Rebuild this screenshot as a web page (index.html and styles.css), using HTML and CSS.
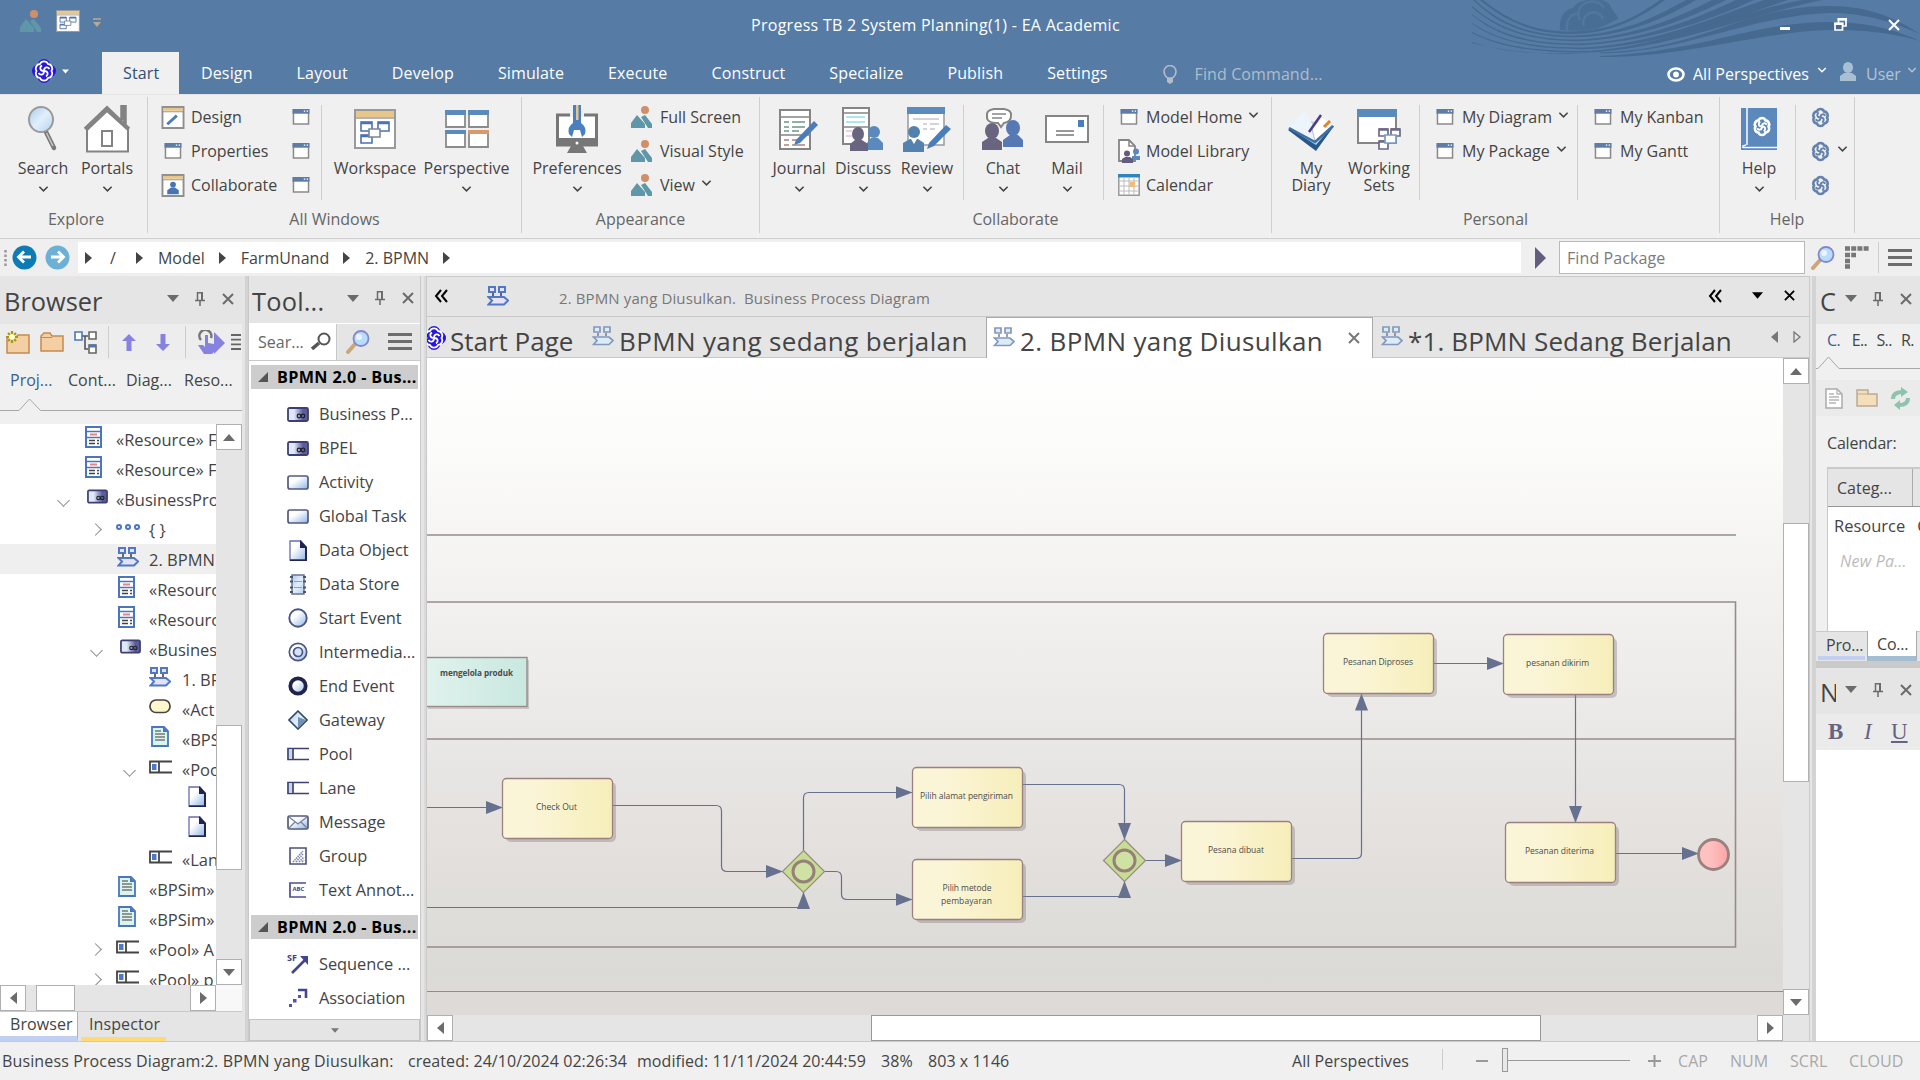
FILE: index.html
```html
<!DOCTYPE html>
<html lang="id">
<head>
<meta charset="utf-8">
<title>Progress TB 2 System Planning(1) - EA Academic</title>
<link rel="stylesheet" href="styles.css">
</head>
<body>
<svg class="defs" width="0" height="0" aria-hidden="true">
  <defs>
    <linearGradient id="gBlue" x1="0" y1="0" x2="1" y2="1"><stop offset=".35" stop-color="#fff"/><stop offset="1" stop-color="#8db4e6"/></linearGradient>
    <linearGradient id="gDark" x1="0" y1="0" x2="1" y2="0"><stop offset=".3" stop-color="#dfe9fa"/><stop offset=".75" stop-color="#5a5c9c"/></linearGradient>
    <linearGradient id="gLens" x1="0" y1="0" x2="1" y2="1"><stop offset="0" stop-color="#a9cbef"/><stop offset=".5" stop-color="#e2effb"/><stop offset="1" stop-color="#b5d2ef"/></linearGradient>
    <symbol id="chev" viewBox="0 0 12 8"><path d="M1.500 1.500 6 6 10.500 1.500" fill="none" stroke="currentColor" stroke-width="1.700"/></symbol>
    <symbol id="tri" viewBox="0 0 12 7"><path d="M0 0H12L6 7Z" fill="currentColor"/></symbol>
    <symbol id="triR" viewBox="0 0 7 12"><path d="M0 0 7 6 0 12Z" fill="currentColor"/></symbol>
    <symbol id="triL" viewBox="0 0 7 12"><path d="M7 0 0 6 7 12Z" fill="currentColor"/></symbol>
    <symbol id="cross" viewBox="0 0 12 12"><path d="M1 1 11 11M11 1 1 11" stroke="currentColor" stroke-width="2"/></symbol>
    <symbol id="pin" viewBox="0 0 10 14"><path d="M2.500 0V8M0 8.500H10M7 0V8M2.500 .7H8M5 9V14" fill="none" stroke="currentColor" stroke-width="1.500"/><path d="M6 0H8V8H6Z" fill="currentColor"/></symbol>
    <symbol id="lines" viewBox="0 0 24 17"><path d="M0 1.500H24M0 8.500H24M0 15.500H24" stroke="currentColor" stroke-width="3"/></symbol>
    <symbol id="dblL" viewBox="0 0 14 14"><path d="M7 1 2 7 7 13M13 1 8 7 13 13" fill="none" stroke="#000" stroke-width="2"/></symbol>
    <symbol id="knot" viewBox="1 0 22 24"><path d="M8 5a4.300 4.300 0 0 1 8 0 4.500 4.500 0 0 1 3.500 7 4.500 4.500 0 0 1-3.500 7 4.300 4.300 0 0 1-8 0 4.500 4.500 0 0 1-3.500-7A4.500 4.500 0 0 1 8 5Z" fill="none" stroke="currentColor" stroke-width="3"/><path d="M12 12C7.500 12 7.500 8 10 6.500M12 12c4.500 0 4.500 4 2 5.500M12 12c0-4.500 4-4.500 5.500-2M12 12c0 4.500-4 4.500-5.500 2" fill="none" stroke="currentColor" stroke-width="2.200"/></symbol>
    <symbol id="logo" viewBox="0 0 24 24"><g fill="#2716e0"><circle cx="12" cy="6.500" r="6.500"/><circle cx="12" cy="17.500" r="6.500"/><circle cx="6.500" cy="12" r="6.500"/><circle cx="17.500" cy="12" r="6.500"/></g><g fill="none" stroke="#fff" stroke-width="1.800"><path d="M8 5a4.300 4.300 0 0 1 8 0 4.500 4.500 0 0 1 3.500 7 4.500 4.500 0 0 1-3.500 7 4.300 4.300 0 0 1-8 0 4.500 4.500 0 0 1-3.500-7A4.500 4.500 0 0 1 8 5Z"/><path d="M12 12C7.500 12 7.500 8 10 6.500M12 12c4.500 0 4.500 4 2 5.500M12 12c0-4.500 4-4.500 5.500-2M12 12c0 4.500-4 4.500-5.500 2"/></g></symbol>
    <symbol id="bpd" viewBox="0 0 22 21"><g fill="#e4e2fc" stroke="#5078c4" stroke-width="2"><path d="M2 2H8V7H2ZM12 2H18V7H12Z"/><path d="M1.500 12H17L21 15.500 17 19.500H1.500L5 15.500Z"/></g><path d="M6 8V11M14 8V11" stroke="#444" stroke-width="1.600"/></symbol>
    <symbol id="bpdSoft" viewBox="0 0 22 21"><g fill="#dcebf8" stroke="#8298bd" stroke-width="1.700"><path d="M2 2H8V7H2ZM12 2H18V7H12Z"/><path d="M1.500 12H17L21 15.500 17 19.500H1.500L5 15.500Z"/></g><path d="M6 8V11M14 8V11" stroke="#777" stroke-width="1.400"/></symbol>
    <symbol id="win" viewBox="0 0 18 17"><path d="M1 1H17V16H1Z" fill="#fff" stroke="#8a8a8a" stroke-width="1.600"/><path d="M0 0H18V5H0Z" fill="#5d7da8"/><path d="M12 1.500h1.500v1.500H12zM15 1.500h1.500v1.500H15z" fill="#fff"/></symbol>
    <symbol id="people" viewBox="0 0 22 22"><path d="M0 22V17L6 9 14 18V22ZM10 11 14 9 21 18V22H17Z" fill="#5f96a8"/><circle cx="14" cy="4" r="4" fill="#d08f68"/></symbol>
    <symbol id="dDesign" viewBox="0 0 24 24"><path d="M1 1H23V23H1Z" fill="#fff" stroke="#8f8f8f" stroke-width="2"/><path d="M2 2H22V5H2Z" fill="#e8c588"/><path d="M1 6H23" stroke="#8f8f8f"/><path d="M6 19 16 10" stroke="#4a7dbb" stroke-width="3"/></symbol>
    <symbol id="dCollab" viewBox="0 0 24 24"><path d="M1 1H23V23H1Z" fill="#fff" stroke="#8f8f8f" stroke-width="2"/><path d="M2 2H22V5H2Z" fill="#e8c588"/><path d="M1 6H23" stroke="#8f8f8f"/><circle cx="12" cy="11" r="3" fill="#4674b5"/><path d="M6 21V17L10 14H14L18 17V21Z" fill="#4674b5"/></symbol>
    <symbol id="search" viewBox="0 0 30 46"><path d="M18 26 26 42" stroke="#777" stroke-width="4.500" stroke-linecap="round"/><path d="M18.500 27 25 40" stroke="#c8c8c8" stroke-width="1.500"/><ellipse cx="13" cy="13.500" rx="12" ry="12.500" fill="url(#gLens)" stroke="#9a9a9a" stroke-width="2"/></symbol>
    <symbol id="house" viewBox="0 0 46 48"><path d="M3 25V46.500H44V25L23 6Z" fill="#fff" stroke="#838383" stroke-width="2"/><path d="M1 24 23 3 45 24M38 15V1H41V19" fill="none" stroke="#838383" stroke-width="3.500"/><path d="M18 26H28V41H18Z" fill="#fff" stroke="#838383" stroke-width="2"/></symbol>
    <symbol id="workspace" viewBox="0 0 42 40"><path d="M1 1H41V39H1Z" fill="#fff" stroke="#9a9a9a" stroke-width="2"/><path d="M2 2H40V8H2Z" fill="#e8c588"/><path d="M1 9H41" stroke="#9a9a9a" stroke-width="1.500"/><g fill="#fff" stroke="#4c72b4" stroke-width="1.600"><path d="M7 13H18V22H7ZM24 13H35V22H24ZM7 26H18V34H7Z"/><path d="M7 14H18M24 14H35M7 27H18" stroke-width="2.500"/><path d="M15 20H26V28H15Z" stroke="#789"/></g></symbol>
    <symbol id="persp" viewBox="0 0 44 38"><g fill="#fff" stroke="#8b8b8b" stroke-width="1.800"><path d="M1 1H20V17H1ZM24 1H43V17H24ZM1 21H20V37H1ZM24 21H43V37H24Z"/></g><path d="M0 0H21V5H0ZM23 0H44V5H23ZM0 20H21V24H0Z" fill="#5b8abd"/><path d="M23 20H44V24H23Z" fill="#d79a68"/></symbol>
    <symbol id="prefs" viewBox="0 0 42 48"><path d="M1.500 10H40.500V40H1.500Z" fill="#fff" stroke="#777" stroke-width="3"/><path d="M1 33H41V41H1ZM15 41H27L31 48H11Z" fill="#777"/><circle cx="21" cy="38" r="1.500" fill="#fff"/><path d="M14 8H28V12H14Z" fill="#f0f0f0"/><path d="M17 0H25V18Q31 22 29 29L26 32 24 25H18L16 32 13 29Q11 22 17 18Z" fill="#4a7fc0"/><path d="M20 0H22.500V15H20Z" fill="#e8c588"/></symbol>
    <symbol id="journal" viewBox="0 0 40 41"><path d="M1 1H31V40H1Z" fill="#fff" stroke="#858585" stroke-width="2"/><path d="M1 8H31M1 26H31" stroke="#858585" stroke-width="1.500"/><path d="M5 13H10M13 13H26M5 18H10M13 18H26M5 22H10M13 22H20" stroke="#6f9588" stroke-width="1.500"/><path d="M5 31H10M13 31H19M5 36H10M13 36H26" stroke="#b28373" stroke-width="1.500"/><path d="M17 31 35 12 39 16 21 34 15 36Z" fill="#4a7dbb"/></symbol>
    <symbol id="discuss" viewBox="0 0 42 44"><path d="M1 1H27V37H1Z" fill="#fff" stroke="#858585" stroke-width="2"/><path d="M1 6H27M1 20H27" stroke="#858585" stroke-width="1.500"/><path d="M4 10H23M4 15H23" stroke="#59d0db"/><path d="M4 24H10M4 29H10" stroke="#e79ad0"/><circle cx="32" cy="25" r="6" fill="#5a89bd"/><path d="M24 43V37L29 31H36L41 36V43Z" fill="#5a89bd"/><ellipse cx="16" cy="27" rx="6" ry="7" fill="#69647f"/><path d="M8 44V37L13 33H20L26 37V44Z" fill="#69647f"/></symbol>
    <symbol id="review" viewBox="0 0 48 45"><path d="M5 1H41V38H5Z" fill="#fff" stroke="#999" stroke-width="1.500"/><path d="M4 0H42V7H4Z" fill="#5b8abd"/><path d="M10 12H36M20 17H24M27 17H36M20 22H24M27 22H32" stroke="#aaa"/><circle cx="11" cy="25" r="6" fill="#5382ae"/><path d="M0 45V36L7 32H15L21 36V45Z" fill="#5382ae"/><path d="M8 32 11 37 14 32" fill="#fff"/><path d="M26 36 43 18 48 22 31 39 24 42Z" fill="#4a7dbb"/></symbol>
    <symbol id="chat" viewBox="0 0 42 42"><path d="M12 1H22Q30 2 29 8 29 14 22 15L19 19 16 15Q4 15 5 8 4 2 12 1Z" fill="#fff" stroke="#858585" stroke-width="2"/><path d="M10 6H24M10 10H20" stroke="#858585" stroke-width="1.500"/><ellipse cx="31" cy="20" rx="7" ry="8" fill="#5678b5"/><path d="M21 39V32L28 27H36L41 32V39Z" fill="#5678b5"/><ellipse cx="10" cy="23" rx="7" ry="8" fill="#69647f"/><path d="M0 42V34L6 30H14L20 34V42Z" fill="#69647f"/></symbol>
    <symbol id="mail" viewBox="0 0 44 28"><path d="M1 1H43V27H1Z" fill="#fff" stroke="#858585" stroke-width="2"/><path d="M33 5H39V12H33Z" fill="#4a7dbb"/><path d="M11 16H29M11 20H29" stroke="#777" stroke-width="1.500"/></symbol>
    <symbol id="library" viewBox="0 0 22 24"><path d="M1 1H11L17 7V22H1Z" fill="#fff" stroke="#858585" stroke-width="1.800"/><path d="M11 1V7H17" fill="none" stroke="#858585" stroke-width="1.500"/><circle cx="18" cy="12.500" r="3" fill="#5a89bd"/><path d="M14 21V17H22V21Z" fill="#5a89bd"/><circle cx="9" cy="14.500" r="3" fill="#625c80"/><path d="M4 24V20L7 18H12L15 20V24Z" fill="#625c80"/></symbol>
    <symbol id="calendar" viewBox="0 0 22 22"><path d="M.8 1H21.200V21.200H.8Z" fill="#fff" stroke="#999" stroke-width="1.500"/><path d="M1 7H21M1 12H21M1 17H21M6 4V21M11 4V21M16 4V21" stroke="#bbb"/><path d="M0 0H22V3.500H0Z" fill="#2e86bd"/><path d="M11.500 8H17V13H11.500Z" fill="#f5b97a"/></symbol>
    <symbol id="diary" viewBox="0 0 46 44"><path d="M0 23 16 14 46 19 28 44Z" fill="#28588a"/><path d="M1 21 17 13 45 18 28 38Z" fill="#bcd4ea"/><path d="M1 20 17 4 28 24 27 34Z" fill="#eef4fc"/><path d="M27 34 24 22 34 11 44 18Z" fill="#fff"/><path d="M27 34 24 22" stroke="#a9bfd8"/><path d="M1 21 27 35 45 19" fill="none" stroke="#3f6fa5" stroke-width="2.500"/><path d="M21 25 33 8" stroke="#4a3b8c" stroke-width="2.500"/><path d="M36 20 42 14" stroke="#e08030" stroke-width="3"/></symbol>
    <symbol id="sets" viewBox="0 0 44 41"><path d="M1 1H39V34H1Z" fill="#fff" stroke="#858585" stroke-width="2"/><path d="M0 0H40V8H0Z" fill="#5b8abd"/><g fill="#fff" stroke="#6c6a85" stroke-width="1.700"><path d="M22 20H31V27H22ZM34 20H43V27H34ZM22 32H31V40H22Z"/><path d="M22 20.500H31M34 20.500H43M22 32.500H31" stroke-width="2.500"/><path d="M28 26H39V34H28Z" stroke="#789cc0"/></g></symbol>
    <symbol id="book" viewBox="0 0 36 42"><path d="M0 0H36V42H0Z" fill="#5b89bb"/><path d="M6 0V37M2 39.500H36" stroke="#f4f7fb" stroke-width="1.600"/><path d="M2 40V38L5 37" fill="none" stroke="#f4f7fb" stroke-width="1.600"/></symbol>
    <symbol id="lens" viewBox="0 0 24 24"><path d="M2 22 10 13" stroke="#c9a777" stroke-width="4" stroke-linecap="round"/><circle cx="15" cy="8.500" r="7.500" fill="#b9dcff" stroke="#8387cc" stroke-width="1.800"/><circle cx="13" cy="7" r="3" fill="#e9f5ff"/></symbol>
    <symbol id="resource" viewBox="0 0 17 22"><path d="M1 1H16V21H1Z" fill="#fff" stroke="#4a76c0" stroke-width="2"/><path d="M1 5.500H16M1 11.500H16" stroke="#4a76c0" stroke-width="1.500"/><path d="M5 8.500H12" stroke="#ef8080" stroke-width="2"/><path d="M4 14.500H10M4 17.500H10M12 14.500H14M12 17.500H14" stroke="#444" stroke-width="1.300"/></symbol>
    <symbol id="bp" viewBox="0 0 22 15"><rect x="1" y="1" width="20" height="13" rx="1.500" fill="url(#gDark)" stroke="#3d3f73" stroke-width="1.800"/><circle cx="12" cy="9" r="1.800" fill="none" stroke="#222" stroke-width="1.200"/><circle cx="16" cy="9" r="1.800" fill="none" stroke="#222" stroke-width="1.200"/></symbol>
    <symbol id="act" viewBox="0 0 22 15"><rect x="1" y="1" width="20" height="13" rx="2" fill="url(#gBlue)" stroke="#55597f" stroke-width="1.700"/></symbol>
    <symbol id="dots" viewBox="0 0 24 8"><g fill="none" stroke="#4a76c0" stroke-width="2"><circle cx="3" cy="4" r="2"/><circle cx="12" cy="4" r="2"/><circle cx="21" cy="4" r="2"/></g></symbol>
    <symbol id="oval" viewBox="0 0 22 15"><rect x="1" y="1" width="20" height="12.500" rx="6" fill="#fff8cc" stroke="#444" stroke-width="1.700"/></symbol>
    <symbol id="sim" viewBox="0 0 18 21"><path d="M1 1H13L17 5V20H1Z" fill="#d9f5ef" stroke="#4a76c0" stroke-width="1.800"/><path d="M12 1V6H17Z" fill="#4a76c0"/><path d="M4 5H10M4 8H14M4 11H14M4 14H14" stroke="#777" stroke-width="1.300"/></symbol>
    <symbol id="poolT" viewBox="0 0 23 14"><path d="M23 1.500H1V12.500H23M10 1.500V12.500" fill="none" stroke="#444" stroke-width="1.800"/><path d="M3 4H7.500V10H3Z" fill="#4d78cc"/></symbol>
    <symbol id="pool" viewBox="0 0 22 14"><path d="M22 1.500H1V12.500H22M6 1.500V12.500" fill="none" stroke="#3f4270" stroke-width="1.700"/><path d="M2 3H5V11H2Z" fill="#bcd8f4"/></symbol>
    <symbol id="data" viewBox="0 0 18 21"><path d="M1 1H12L17 7V20H1Z" fill="url(#gBlue)" stroke="#6a6cb0" stroke-width="1.300"/><path d="M11 0 18 7V21H1V19.500H16V8H11Z" fill="#1f2550"/></symbol>
    <symbol id="store" viewBox="0 0 18 21"><rect x="3" y="1" width="12" height="19" fill="url(#gLens)" stroke="#6a7190" stroke-width="1.500"/><path d="M1 3H4M1 7.500H4M1 13.500H4M1 18H4M14 3H17M14 7.500H17M14 13.500H17M14 18H17" stroke="#4c526e" stroke-width="2.200"/><path d="M5 7.500H13M5 13.500H13" stroke="#8fa3c0" stroke-width="1"/></symbol>
    <symbol id="evS" viewBox="0 0 20 20"><circle cx="10" cy="10" r="8.700" fill="url(#gBlue)" stroke="#4b5486" stroke-width="1.900"/></symbol>
    <symbol id="evI" viewBox="0 0 20 20"><circle cx="10" cy="10" r="8.700" fill="url(#gBlue)" stroke="#4b5486" stroke-width="1.700"/><circle cx="10" cy="10" r="4.500" fill="#d5e4f5" stroke="#4b5486" stroke-width="1.700"/></symbol>
    <symbol id="evE" viewBox="0 0 20 20"><circle cx="10" cy="10" r="7.700" fill="url(#gBlue)" stroke="#20234c" stroke-width="3.800"/></symbol>
    <symbol id="gate" viewBox="0 0 20 20"><path d="M10 1 19 10 10 19 1 10Z" fill="url(#gLens)" stroke="#34486c" stroke-width="1.600"/><path d="M10 18 18 10 10 7Z" fill="#6f92b4"/></symbol>
    <symbol id="msg" viewBox="0 0 22 15"><rect x="1" y="1" width="20" height="13" rx="1.500" fill="url(#gBlue)" stroke="#555b78" stroke-width="1.700"/><path d="M2 2 11 9 20 2M2 13 8 7M20 13 14 7" fill="none" stroke="#777f96" stroke-width="1.200"/></symbol>
    <symbol id="group" viewBox="0 0 18 18"><path d="M1 1H17V17H1Z" fill="#fff" stroke="#4b4f7c" stroke-width="1.600"/><path d="M4 15 14 4M7 15 14 7M10 15 15 10M13 15 15 13" stroke="#7d86a8" stroke-width="1.600" stroke-dasharray="1.500 .8"/></symbol>
    <symbol id="annot" viewBox="0 0 18 16"><path d="M17 1H1V15H17" fill="none" stroke="#4b4f90" stroke-width="1.700"/><text x="3.500" y="8.500" class="mini">ABC</text></symbol>
    <symbol id="seq" viewBox="0 0 22 21"><text x="0" y="7" class="mini mini-sf">SF</text><path d="M5 19 18 6" stroke="#45458f" stroke-width="2.600"/><path d="M13 2H21V11Z" fill="#45458f"/></symbol>
    <symbol id="assoc" viewBox="0 0 20 20"><path d="M1 16h3v3H1zM5 11h3.500v3.500H5zM10 7h3v3h-3z" fill="#5152b0"/><path d="M10 2H18V10" fill="none" stroke="#45458f" stroke-width="2.600"/></symbol>
    <symbol id="folder" viewBox="0 0 24 20"><path d="M1 19V4L4 1H10L12 4H23V19Z" fill="#f3cfa3" stroke="#c48b52" stroke-width="1.500"/><path d="M1 5.500H12" stroke="#c48b52"/></symbol>
  </defs>
</svg>

<div class="app">
  <header class="titlebar">
    <svg class="swirl" width="448" height="60" viewBox="0 0 448 60">
      <g fill="#46698f">
        <path d="M11 0C40 23 65 31.500 98 31.500 140 31.500 165 16 188 0H193C168 18 140 34 98 34 65 33.500 38 25 8 0Z"/>
        <path d="M3 0C33 28 65 35.500 102 35.500 150 34.500 185 16 214 0H224C190 20 150 37 102 37.300 65 37 31 30 1 0Z"/>
        <path d="M0 6C30 32 65 39.500 105 39.500 160 37.500 205 18 240 0H254C210 22 160 40 105 41.200 65 41 30 34 0 7.500Z"/>
        <path d="M0 14C30 38 65 43.500 108 43.500 170 41.500 225 18 264 0H282C235 22 170 43 108 45.200 65 45 30 40 0 15Z"/>
        <path d="M0 23C30 43 65 47.500 112 47.500 180 44.500 240 18 292 0H316C250 22 185 46 112 49.200 65 49 30 44 0 24Z"/>
        <path d="M0 32C30 47 65 51 116 51 190 47 250 16 330 0H350C260 20 195 49 116 52.600 65 52.500 30 48.500 0 33Z"/>
        <path d="M0 42C25 50 45 53 75 53H112C90 54.500 45 54.500 0 43Z"/>
        <path d="M128 52.500C230 50 270 6 358 6 395 6 422 17 448 34 416 20 390 13 358 13 275 16 215 52 128 53.500Z"/>
        <path d="M128 56C230 52 280 22 358 22 400 22 428 32 448 41 420 33 395 30 358 30 285 32 215 57 128 57Z"/>
        <path d="M88 30C87 18 92 9 101 8 106-2 132-4 138 5 141 12 146 15 146 19L134 25C120 32 104 31 88 30Z" opacity=".75"/>
      </g>
      <path d="M95 30C94 20 99 13 106 14M108 20A12 11 0 0 1 132 8M112 26A9 9 0 1 1 131 19" fill="none" stroke="#52779f" stroke-width="2.500"/>
    </svg>
    <div class="title-row">
      <div class="quick">
        <svg width="22" height="22"><use href="#people"/></svg>
        <svg width="24" height="22" viewBox="0 0 42 40" preserveAspectRatio="none"><use href="#workspace" width="42" height="40"/></svg>
        <svg class="quick-more" width="8" height="9" viewBox="0 0 8 9"><path d="M0 1H8" stroke="currentColor" stroke-width="1.500"/><path d="M0 4H8L4 9Z" fill="currentColor"/></svg>
      </div>
      <div class="title">Progress TB 2 System Planning(1) - EA Academic</div>
      <div class="winbtns">
        <svg width="10" height="3"><path d="M0 0H10V3H0Z" fill="#fff"/></svg>
        <svg width="13" height="13" viewBox="0 0 13 13"><path d="M4.500 5V1.500H12V8H9M1 5.500H8.500V12H1Z" fill="none" stroke="#fff" stroke-width="1.700"/><path d="M0 4.500H9.500V7H0ZM3.500 0H13V2.500H3.500Z" fill="#fff"/></svg>
        <svg class="white" width="12" height="12"><use href="#cross"/></svg>
      </div>
    </div>
    <nav class="tabs">
      <div class="appbtn"><svg width="24" height="24"><use href="#logo"/></svg><svg width="7" height="5"><use href="#tri"/></svg></div>
      <span class="tab on">Start</span><span class="tab">Design</span><span class="tab">Layout</span><span class="tab">Develop</span><span class="tab">Simulate</span><span class="tab">Execute</span><span class="tab">Construct</span><span class="tab">Specialize</span><span class="tab">Publish</span><span class="tab">Settings</span>
      <div class="find"><svg width="14" height="19" viewBox="0 0 14 19"><path d="M4.500 13Q1 10 1 6.500A6 6 0 0 1 13 6.500Q13 10 9.500 13Z" fill="none" stroke="#b4bcc8" stroke-width="1.500"/><path d="M4 13H10V17L7 19 4 17Z" fill="#b4bcc8"/></svg><span>Find Command...</span></div>
      <div class="acct">
        <svg width="18" height="15" viewBox="0 0 18 15"><ellipse cx="9" cy="7.500" rx="7.500" ry="6" fill="none" stroke="#fff" stroke-width="2.600"/><circle cx="9" cy="7.500" r="2.900" fill="#fff"/></svg>
        <span class="persp">All Perspectives</span><svg class="cv" width="10" height="8"><use href="#chev"/></svg>
        <svg class="usr" width="16" height="19" viewBox="0 0 16 19"><ellipse cx="8" cy="5.500" rx="5" ry="5.500" fill="#a9bfd4"/><path d="M0 19V14L4 11H12L16 14V19Z" fill="#a9bfd4"/></svg>
        <span class="dim">User</span><svg class="cv dim" width="10" height="8"><use href="#chev"/></svg>
      </div>
    </nav>
  </header>

  <section class="ribbon">
    <div class="grp g1">
      <div class="body">
        <div class="big"><i><svg width="30" height="46"><use href="#search"/></svg></i><b>Search</b><svg class="cv" width="11" height="8"><use href="#chev"/></svg></div>
        <div class="big"><i><svg width="46" height="48"><use href="#house"/></svg></i><b>Portals</b><svg class="cv" width="11" height="8"><use href="#chev"/></svg></div>
      </div><div class="cap">Explore</div>
    </div>
    <div class="grp g2">
      <div class="body">
        <div class="list lw">
          <div><i><svg width="24" height="23"><use href="#dDesign"/></svg></i><span>Design</span><svg class="end" width="18" height="16"><use href="#win"/></svg></div>
          <div><i><svg width="18" height="16"><use href="#win"/></svg></i><span>Properties</span><svg class="end" width="18" height="16"><use href="#win"/></svg></div>
          <div><i><svg width="24" height="23"><use href="#dCollab"/></svg></i><span>Collaborate</span><svg class="end" width="18" height="16"><use href="#win"/></svg></div>
        </div>
        <div class="vsep"></div>
        <div class="big b94"><i><svg width="42" height="40"><use href="#workspace"/></svg></i><b>Workspace</b></div>
        <div class="big b89"><i><svg width="44" height="38"><use href="#persp"/></svg></i><b>Perspective</b><svg class="cv" width="11" height="8"><use href="#chev"/></svg></div>
      </div><div class="cap">All Windows</div>
    </div>
    <div class="grp g3">
      <div class="body">
        <div class="big b92"><i><svg width="42" height="48"><use href="#prefs"/></svg></i><b>Preferences</b><svg class="cv" width="11" height="8"><use href="#chev"/></svg></div>
        <div class="list lp">
          <div><i><svg width="22" height="22"><use href="#people"/></svg></i><span>Full Screen</span></div>
          <div><i><svg width="22" height="22"><use href="#people"/></svg></i><span>Visual Style</span></div>
          <div><i><svg width="22" height="22"><use href="#people"/></svg></i><span>View</span><svg class="cv" width="11" height="8"><use href="#chev"/></svg></div>
        </div>
      </div><div class="cap">Appearance</div>
    </div>
    <div class="grp g4">
      <div class="body">
        <div class="big"><i><svg width="40" height="41"><use href="#journal"/></svg></i><b>Journal</b><svg class="cv" width="11" height="8"><use href="#chev"/></svg></div>
        <div class="big"><i><svg width="42" height="44"><use href="#discuss"/></svg></i><b>Discuss</b><svg class="cv" width="11" height="8"><use href="#chev"/></svg></div>
        <div class="big"><i><svg width="48" height="45"><use href="#review"/></svg></i><b>Review</b><svg class="cv" width="11" height="8"><use href="#chev"/></svg></div>
        <div class="vsep wide"></div>
        <div class="big"><i><svg width="42" height="42"><use href="#chat"/></svg></i><b>Chat</b><svg class="cv" width="11" height="8"><use href="#chev"/></svg></div>
        <div class="big"><i><svg width="44" height="28"><use href="#mail"/></svg></i><b>Mail</b><svg class="cv" width="11" height="8"><use href="#chev"/></svg></div>
        <div class="vsep wide"></div>
        <div class="list lm">
          <div><i><svg width="18" height="16"><use href="#win"/></svg></i><span>Model Home</span><svg class="cv" width="11" height="8"><use href="#chev"/></svg></div>
          <div><i><svg width="22" height="24"><use href="#library"/></svg></i><span>Model Library</span></div>
          <div><i><svg width="22" height="22"><use href="#calendar"/></svg></i><span>Calendar</span></div>
        </div>
      </div><div class="cap">Collaborate</div>
    </div>
    <div class="grp g5">
      <div class="body">
        <div class="big"><i><svg width="46" height="44"><use href="#diary"/></svg></i><b>My<br>Diary</b></div>
        <div class="big b72"><i><svg width="44" height="41"><use href="#sets"/></svg></i><b>Working<br>Sets</b></div>
        <div class="vsep wide"></div>
        <div class="list ld">
          <div><i><svg width="18" height="16"><use href="#win"/></svg></i><span>My Diagram</span><svg class="cv" width="11" height="8"><use href="#chev"/></svg></div>
          <div><i><svg width="18" height="16"><use href="#win"/></svg></i><span>My Package</span><svg class="cv" width="11" height="8"><use href="#chev"/></svg></div>
        </div>
        <div class="vsep after"></div>
        <div class="list lk">
          <div><i><svg width="18" height="16"><use href="#win"/></svg></i><span>My Kanban</span></div>
          <div><i><svg width="18" height="16"><use href="#win"/></svg></i><span>My Gantt</span></div>
        </div>
      </div><div class="cap">Personal</div>
    </div>
    <div class="grp g6">
      <div class="body">
        <div class="big"><i><svg width="36" height="42" viewBox="0 0 36 42"><use href="#book" width="36" height="42"/><use href="#knot" class="onbook" x="11" y="8" width="20" height="21"/></svg></i><b>Help</b><svg class="cv" width="11" height="8"><use href="#chev"/></svg></div>
        <div class="vsep wide"></div>
        <div class="list lh">
          <div><svg class="knot" width="21" height="21"><use href="#knot"/></svg></div>
          <div><svg class="knot" width="21" height="21"><use href="#knot"/></svg><svg class="cv" width="11" height="8"><use href="#chev"/></svg></div>
          <div><svg class="knot" width="21" height="21"><use href="#knot"/></svg></div>
        </div>
      </div><div class="cap">Help</div>
    </div>
  </section>

  <section class="crumbs">
    <svg class="grip" width="3" height="16" viewBox="0 0 3 16"><path d="M1.500 0V16" stroke="#999" stroke-width="2.500" stroke-dasharray="2.500 2"/></svg>
    <svg class="back" width="25" height="25" viewBox="0 0 25 25"><circle cx="12.500" cy="12.500" r="12" fill="#0f7bb5"/><path d="M19 12H8M12 6.500 6.500 12 12 17.500" fill="none" stroke="#fff" stroke-width="2.800"/></svg>
    <svg class="fwd" width="25" height="25" viewBox="0 0 25 25"><circle cx="12.500" cy="12.500" r="12" fill="#6cb1d5"/><path d="M6 12H17M13 6.500 18.500 12 13 17.500" fill="none" stroke="#fff" stroke-width="2.800"/></svg>
    <div class="path">
      <svg width="7" height="12"><use href="#triR"/></svg><span>/</span>
      <svg width="7" height="12"><use href="#triR"/></svg><span>Model</span>
      <svg width="7" height="12"><use href="#triR"/></svg><span>FarmUnand</span>
      <svg width="7" height="12"><use href="#triR"/></svg><span>2. BPMN</span>
      <svg width="7" height="12"><use href="#triR"/></svg>
    </div>
    <svg class="go" width="11" height="22" viewBox="0 0 11 22"><path d="M0 0 11 11 0 22Z" fill="#625f7d"/></svg>
    <div class="findpkg">Find Package</div>
    <svg class="lens" width="24" height="24"><use href="#lens"/></svg>
    <svg class="dotgrid" width="24" height="23" viewBox="0 0 24 23"><path d="M0 2.500H24M0 9H11M0 15H5M0 20.500H5" stroke="#777" stroke-width="4.500" stroke-dasharray="5 1.200"/></svg>
    <div class="csep"></div>
    <svg class="gray" width="24" height="17"><use href="#lines"/></svg>
  </section>

  <main class="work">
    <aside class="browser">
      <div class="phead"><h2>Browser</h2><svg width="12" height="7"><use href="#tri"/></svg><svg width="10" height="14"><use href="#pin"/></svg><svg width="12" height="12"><use href="#cross"/></svg></div>
      <div class="btools">
        <svg width="24" height="23" viewBox="0 0 24 23"><path d="M1 22V6H10L12 4H23V22Z" fill="#f3cfa3" stroke="#c48b52" stroke-width="1.500"/><path d="M6 0V12M0 6H12M2 2 10 10M10 2 2 10" stroke="#a99612" stroke-width="2.200"/><circle cx="6" cy="6" r="3" fill="#fffbd0"/></svg>
        <svg width="24" height="20"><use href="#folder"/></svg>
        <svg width="23" height="23" viewBox="0 0 23 23"><path d="M8 5H14M11 5V18H14" fill="none" stroke="#555" stroke-width="1.600"/><g fill="#fff" stroke="#666" stroke-width="1.600"><path d="M1 1H8V9H1Z" stroke="#4a76c0"/><path d="M15 1H22V8H15ZM15 14H22V22H15Z"/></g><path d="M15 15H22" stroke="#4a76c0" stroke-width="3"/></svg>
        <span class="tsep"></span>
        <svg width="14" height="17" viewBox="0 0 14 17"><path d="M7 0 14 7H9.500V17H4.500V7H0Z" fill="#8582e0"/></svg>
        <svg width="14" height="17" viewBox="0 0 14 17"><path d="M7 17 14 10H9.500V0H4.500V10H0Z" fill="#8582e0"/></svg>
        <span class="tsep"></span>
        <svg width="27" height="25" viewBox="0 0 27 25"><path d="M3 10A6 6 0 1 1 13 8" fill="none" stroke="#777" stroke-width="2.500"/><path d="M7 5H10V13L16 14V22L14 24H6L0 15 5 15 7 17Z" fill="#8582e0"/><path d="M16 2 27 13 16 24Z" fill="#8582e0"/></svg>
        <svg class="gray" width="10" height="16" viewBox="0 0 10 16"><path d="M0 1H10M0 5.700H10M0 10.300H10M0 15H10" stroke="#666" stroke-width="1.800"/></svg>
      </div>
      <div class="btabs"><span class="blue">Proj...</span><span>Cont...</span><span>Diag...</span><span>Reso...</span></div>
      <svg class="peak" width="242" height="26" viewBox="0 0 242 26"><path d="M0 12.500H19L29.500 1 40.500 12.500H242" fill="none" stroke="#a8a8a8"/></svg>
      <div class="treewrap">
        <div class="tree">
          <div class="n r0"><svg width="17" height="22"><use href="#resource"/></svg><span>«Resource» F</span></div>
          <div class="n r0"><svg width="17" height="22"><use href="#resource"/></svg><span>«Resource» F</span></div>
          <div class="n r2 exp"><svg width="21" height="15"><use href="#bp"/></svg><span>«BusinessPro</span></div>
          <div class="n r3 col"><svg width="24" height="8"><use href="#dots"/></svg><span>{ }</span></div>
          <div class="n r4 sel"><svg width="22" height="21"><use href="#bpd"/></svg><span>2. BPMN</span></div>
          <div class="n r5"><svg width="17" height="22"><use href="#resource"/></svg><span>«Resourc</span></div>
          <div class="n r5"><svg width="17" height="22"><use href="#resource"/></svg><span>«Resourc</span></div>
          <div class="n r7 exp"><svg width="21" height="15"><use href="#bp"/></svg><span>«Business</span></div>
          <div class="n r8"><svg width="22" height="21"><use href="#bpd"/></svg><span>1. BP</span></div>
          <div class="n r8"><svg width="22" height="15"><use href="#oval"/></svg><span>«Act</span></div>
          <div class="n r10"><svg width="18" height="21"><use href="#sim"/></svg><span>«BPS</span></div>
          <div class="n r8 exp"><svg width="23" height="14"><use href="#poolT"/></svg><span>«Poo</span></div>
          <div class="n r12"><svg width="18" height="21"><use href="#data"/></svg></div>
          <div class="n r12"><svg width="18" height="21"><use href="#data"/></svg></div>
          <div class="n r8"><svg width="23" height="14"><use href="#poolT"/></svg><span>«Lan</span></div>
          <div class="n r5"><svg width="18" height="21"><use href="#sim"/></svg><span>«BPSim»</span></div>
          <div class="n r5"><svg width="18" height="21"><use href="#sim"/></svg><span>«BPSim»</span></div>
          <div class="n r3 col"><svg width="23" height="14"><use href="#poolT"/></svg><span>«Pool» A</span></div>
          <div class="n r3 col"><svg width="23" height="14"><use href="#poolT"/></svg><span>«Pool» p</span></div>
        </div>
        <div class="vscroll"><div class="sb"><svg width="12" height="7"><use href="#tri"/></svg></div><div class="thumb"></div><div class="sb dn"><svg width="12" height="7"><use href="#tri"/></svg></div></div>
      </div>
      <div class="hscroll"><div class="sb"><svg width="7" height="12"><use href="#triL"/></svg></div><div class="thumb"></div><div class="sb rt"><svg width="7" height="12"><use href="#triR"/></svg></div><div class="corner"></div></div>
      <div class="bfoot"><span class="on">Browser</span><span class="insp">Inspector</span></div>
    </aside>

    <aside class="toolbox">
      <div class="phead"><h2>Tool...</h2><svg width="12" height="7"><use href="#tri"/></svg><svg width="10" height="14"><use href="#pin"/></svg><svg width="12" height="12"><use href="#cross"/></svg></div>
      <div class="tsearch"><div class="box"><span>Sear...</span><svg width="20" height="19" viewBox="0 0 20 19"><circle cx="13" cy="7" r="5.500" fill="none" stroke="#555" stroke-width="2"/><path d="M1 17 8 11" stroke="#555" stroke-width="3.500"/></svg></div><svg class="lens" width="24" height="24"><use href="#lens"/></svg><svg class="gray" width="24" height="17"><use href="#lines"/></svg></div>
      <div class="tlist">
        <div class="th"><svg width="10" height="10" viewBox="0 0 10 10"><path d="M10 0V10H0Z" fill="#555"/></svg>BPMN 2.0 - Bus...</div>
        <div class="ti"><i><svg width="22" height="15"><use href="#bp"/></svg></i>Business P...</div>
        <div class="ti"><i><svg width="22" height="15"><use href="#bp"/></svg></i>BPEL</div>
        <div class="ti"><i><svg width="22" height="15"><use href="#act"/></svg></i>Activity</div>
        <div class="ti"><i><svg width="22" height="15"><use href="#act"/></svg></i>Global Task</div>
        <div class="ti"><i><svg width="18" height="21"><use href="#data"/></svg></i>Data Object</div>
        <div class="ti"><i><svg width="18" height="21"><use href="#store"/></svg></i>Data Store</div>
        <div class="ti"><i><svg width="20" height="20"><use href="#evS"/></svg></i>Start Event</div>
        <div class="ti"><i><svg width="20" height="20"><use href="#evI"/></svg></i>Intermedia...</div>
        <div class="ti"><i><svg width="20" height="20"><use href="#evE"/></svg></i>End Event</div>
        <div class="ti"><i><svg width="20" height="20"><use href="#gate"/></svg></i>Gateway</div>
        <div class="ti"><i><svg width="22" height="14"><use href="#pool"/></svg></i>Pool</div>
        <div class="ti"><i><svg width="22" height="14"><use href="#pool"/></svg></i>Lane</div>
        <div class="ti"><i><svg width="22" height="15"><use href="#msg"/></svg></i>Message</div>
        <div class="ti"><i><svg width="18" height="18"><use href="#group"/></svg></i>Group</div>
        <div class="ti"><i><svg width="18" height="16"><use href="#annot"/></svg></i>Text Annot...</div>
        <div class="th two"><svg width="10" height="10" viewBox="0 0 10 10"><path d="M10 0V10H0Z" fill="#555"/></svg>BPMN 2.0 - Bus...</div>
        <div class="ti"><i><svg width="22" height="21"><use href="#seq"/></svg></i>Sequence ...</div>
        <div class="ti"><i><svg width="20" height="20"><use href="#assoc"/></svg></i>Association</div>
      </div>
      <div class="tmore"><svg width="8" height="5"><use href="#tri"/></svg></div>
    </aside>

    <section class="doc">
      <div class="dhead"><svg class="d1" width="14" height="14"><use href="#dblL"/></svg><svg class="d2" width="22" height="21"><use href="#bpd"/></svg><span>2. BPMN yang Diusulkan.&nbsp; Business Process Diagram</span><svg class="d3" width="14" height="14"><use href="#dblL"/></svg><svg class="d4" width="11" height="7"><use href="#tri"/></svg><svg class="d5" width="11" height="11"><use href="#cross"/></svg></div>
      <div class="dtabs">
        <div class="dt t1"><svg width="24" height="24"><use href="#logo"/></svg><span>Start Page</span></div>
        <div class="dt t2"><svg width="22" height="21"><use href="#bpdSoft"/></svg><span>BPMN yang sedang berjalan</span></div>
        <div class="dt t3"><svg width="22" height="21"><use href="#bpdSoft"/></svg><span>2. BPMN yang Diusulkan</span><svg class="x" width="12" height="12"><use href="#cross"/></svg></div>
        <div class="dt t4"><svg width="22" height="21"><use href="#bpdSoft"/></svg><span>*1. BPMN Sedang Berjalan</span></div>
        <div class="nav"><svg width="7" height="12"><use href="#triL"/></svg><svg width="8" height="12" viewBox="0 0 8 12"><path d="M1 1 7 6 1 11Z" fill="none" stroke="#777" stroke-width="1.300"/></svg></div>
      </div>
      <div class="dbody">
        <svg class="canvas" width="1356" height="657" viewBox="427 358 1356 657">
          <defs>
            <linearGradient id="bg" x1="0" y1="0" x2="0" y2="1"><stop offset="0" stop-color="#fff"/><stop offset=".12" stop-color="#fcfcfb"/><stop offset=".37" stop-color="#f2f1f0"/><stop offset=".58" stop-color="#e9e8e6"/><stop offset=".7" stop-color="#e5e2e0"/><stop offset=".79" stop-color="#e2dedc"/><stop offset=".83" stop-color="#dfdedb"/><stop offset=".94" stop-color="#dcdad7"/><stop offset="1" stop-color="#dfdad7"/></linearGradient>
            <linearGradient id="task" x1="0" x2="1" y1="0" y2="0"><stop offset=".3" stop-color="#fbf5d7"/><stop offset="1" stop-color="#f6eeb9"/></linearGradient>
            <linearGradient id="teal" x1="0" x2="1" y1="0" y2="0"><stop offset="0" stop-color="#e3f3ee"/><stop offset="1" stop-color="#c8e8e0"/></linearGradient>
            <linearGradient id="pink" x1="0" x2="1" y1="0" y2="0"><stop offset=".4" stop-color="#ffc0c0"/><stop offset="1" stop-color="#fba4a4"/></linearGradient>
            <marker id="arr" viewBox="0 0 17 13" markerWidth="17" markerHeight="13" refX="17" refY="6.500" orient="auto" markerUnits="userSpaceOnUse"><path d="M0 0 17 6.500 0 13Z" fill="#66718f"/></marker>
            <g id="box"><rect x="3.500" y="3.500" width="110" height="60" rx="5" fill="#8a8080" opacity=".4"/><rect width="110" height="60" rx="4" fill="url(#task)" stroke="#9b8080" stroke-width="1.300"/></g>
            <g id="dia"><path d="M0-21 21 0 0 21-21 0Z" fill="#c5dd94" stroke="#9b8a7c" stroke-width="1.200"/><circle r="10.500" fill="#cfe2a4" stroke="#968079" stroke-width="3"/></g>
          </defs>
          <rect x="427" y="358" width="1356" height="657" fill="url(#bg)"/>
          <g fill="none" stroke="#988a8a" stroke-width="1.600"><path d="M427 535H1736M427 602H1735.500V947H427M427 739H1735.500"/><path d="M427 991.500H1783" stroke-width="1.200"/></g>
          <rect x="428" y="660" width="101" height="49" fill="#8a8080" opacity=".35"/><rect x="417" y="657.500" width="110" height="49" fill="url(#teal)" stroke="#9b8a8a" stroke-width="1.400"/>
          <g fill="none" stroke="#66718f" stroke-width="1.200" marker-end="url(#arr)">
            <path class="fl" d="M427 807.500H503"/>
            <path class="fl" d="M612 805.500H716Q721.500 805.500 721.500 811V866Q721.500 871.500 727 871.500H783"/>
            <path class="fl" d="M803.500 850V798Q803.500 792.500 809 792.500H912.500"/>
            <path class="fl" d="M824 871.500H836Q841.500 871.500 841.500 877V894Q841.500 899.500 847 899.500H912.500"/>
            <path class="fl" d="M427 907.500H803.500V892"/>
            <path class="fl" d="M1022 784.500H1119Q1124.500 784.500 1124.500 790V840"/>
            <path class="fl" d="M1022 896.500H1124.500V881"/>
            <path class="fl" d="M1145 860.500H1182"/>
            <path class="fl" d="M1291 858.500H1356Q1361.500 858.500 1361.500 853V693.500"/>
            <path class="fl" d="M1433 663.500H1504"/>
            <path class="fl" d="M1575.500 694V823"/>
            <path class="fl" d="M1615 853.500H1699"/>
          </g>
          <use href="#box" x="502.500" y="778.500"/><use href="#box" x="912.500" y="767.500"/><use href="#box" x="912.500" y="859.500"/><use href="#box" x="1181.500" y="821.500"/><use href="#box" x="1323.500" y="633.500"/><use href="#box" x="1503.500" y="634.500"/><use href="#box" x="1505.500" y="822.500"/>
          <use href="#dia" x="803.500" y="871.500"/><use href="#dia" x="1124.500" y="860.500"/>
          <circle cx="1713.500" cy="854.500" r="15" fill="url(#pink)" stroke="#9b8080" stroke-width="2.800"/>
          <g class="lab">
            <text class="bold" x="440" y="676" textLength="73">mengelola produk</text>
            <text x="536" y="810" textLength="41">Check Out</text>
            <text x="920" y="799" textLength="93">Pilih alamat pengiriman</text>
            <text x="942.500" y="891" textLength="49">Pilih metode</text>
            <text x="941" y="904" textLength="51">pembayaran</text>
            <text x="1208" y="853" textLength="56">Pesana dibuat</text>
            <text x="1343" y="665" textLength="70">Pesanan Diproses</text>
            <text x="1526" y="666" textLength="63">pesanan dikirim</text>
            <text x="1525" y="854" textLength="69">Pesanan diterima</text>
          </g>
        </svg>
        <div class="vscroll"><div class="sb"><svg width="12" height="7"><use href="#tri"/></svg></div><div class="thumb"></div><div class="sb dn"><svg width="12" height="7"><use href="#tri"/></svg></div></div>
      </div>
      <div class="hscroll"><div class="sb"><svg width="7" height="12"><use href="#triL"/></svg></div><div class="thumb"></div><div class="sb rt"><svg width="7" height="12"><use href="#triR"/></svg></div></div>
    </section>

    <aside class="right">
      <div class="phead"><h2>C</h2><svg width="12" height="7"><use href="#tri"/></svg><svg width="10" height="14"><use href="#pin"/></svg><svg width="12" height="12"><use href="#cross"/></svg></div>
      <div class="rtabs"><span class="blue">C.</span><span>E..</span><span>S..</span><span>R.</span></div>
      <svg class="rpeak" width="104" height="22" viewBox="0 0 104 22"><path d="M0 11.500H2L12.500 0 23 11.500H104" fill="none" stroke="#a8a8a8"/></svg>
      <div class="rtools">
        <svg width="18" height="21" viewBox="0 0 18 21"><path d="M1 1H12L17 6V20H1Z" fill="#fff" stroke="#aaa" stroke-width="1.500"/><path d="M4 6H9M4 9H14M4 12H14M4 15H11M12 1V6H17" fill="none" stroke="#b5b5b5" stroke-width="1.300"/></svg>
        <svg width="22" height="18" viewBox="0 0 22 18"><path d="M1 17V1H12V5H21V17Z" fill="#f5deba" stroke="#b9ab97" stroke-width="1.500"/><path d="M1 5H12" stroke="#b9ab97"/></svg>
        <svg width="19" height="23" viewBox="0 0 19 23"><path d="M2 12Q2 5 12 5M17 11Q17 18 8 18" fill="none" stroke="#8cc4ad" stroke-width="4"/><path d="M10 0 17 5 10 10ZM9 13 3 18 9 23Z" fill="#8cc4ad"/></svg>
      </div>
      <div class="rcal">Calendar:</div>
      <div class="rtable"><div class="rth">Categ...</div><div class="rtd">Resource<span>C</span></div><div class="rnew">New Pa...</div></div>
      <div class="rfoot"><span>Pro...</span><span class="on">Co...</span></div>
      <div class="split"></div>
      <div class="phead nh"><h2>N</h2><svg width="12" height="7"><use href="#tri"/></svg><svg width="10" height="14"><use href="#pin"/></svg><svg width="12" height="12"><use href="#cross"/></svg></div>
      <div class="biu"><b>B</b><i>I</i><u>U</u></div>
      <div class="notes"></div>
    </aside>
  </main>

  <footer class="status">
    <span class="s1">Business Process Diagram:2. BPMN yang Diusulkan:</span><span class="s2">created: 24/10/2024 02:26:34</span><span class="s3">modified: 11/11/2024 20:44:59</span><span class="s4">38%</span><span class="s5">803 x 1146</span><span class="s6">All Perspectives</span>
    <svg class="zoomer" width="220" height="38" viewBox="1441 1042 220 38"><path d="M1442.500 1049V1070" stroke="#ccc"/><path d="M1476 1061H1488M1648 1061H1661M1654.500 1055V1067" stroke="#999" stroke-width="2"/><path d="M1502 1060.500H1630" stroke="#999"/><rect x="1502.500" y="1048.500" width="5" height="23" fill="#e8e8e8" stroke="#999"/></svg>
    <span class="k k1">CAP</span><span class="k k2">NUM</span><span class="k k3">SCRL</span><span class="k k4">CLOUD</span>
  </footer>
</div>
</body>
</html>
```

FILE: styles.css
```css
* { box-sizing: border-box; }
body { margin: 0; background: #e5e5e5; font: 16px/20px "Open Sans", "Noto Sans", sans-serif; color: #444; overflow: hidden; }
.app { width: 1920px; height: 1080px; display: flex; flex-direction: column; white-space: nowrap; overflow: hidden; }
svg { display: block; flex: none; }
.defs { position: absolute; }
i { font-style: normal; }
h2 { margin: 0; font-weight: 400; }

.titlebar { position: relative; height: 94px; flex: none; background: #567ca6; color: #fff; }
.swirl { position: absolute; left: 1472px; top: 0; }
.title-row { position: relative; display: flex; height: 52px; }
.quick { width: 751px; display: flex; padding: 10px 0 0 20px; }
.quick svg:nth-child(2) { margin-left: 14px; }
.quick-more { margin: 8px 0 0 13px; color: #b8a898; }
.title { width: 1029px; line-height: 50px; letter-spacing: .28px; }
.winbtns { display: flex; }
.winbtns svg:nth-child(1) { margin-top: 27px; }
.winbtns svg:nth-child(2) { margin: 18px 0 0 44px; }
.winbtns svg:nth-child(3) { margin: 19px 0 0 41px; }
.white { color: #fff; }
.tabs { position: relative; display: flex; height: 42px; align-items: stretch; }
.appbtn { width: 102px; display: flex; align-items: center; padding: 0 0 4px 32px; gap: 6px; }
.tab { padding: 0 22px; line-height: 42px; letter-spacing: .14px; }
.tab.on { width: 77px; padding: 0 21px; background: #f0f0f0; color: #2f4f74; }
.find { display: flex; align-items: center; margin-left: 33px; gap: 18px; color: #aebccb; letter-spacing: .1px; padding-top: 2px; }
.acct { display: flex; align-items: center; margin-left: auto; padding: 2px 3px 0 0; }
.acct .persp { margin-left: 8px; width: 117px; }
.acct .cv { margin: -8px 0 0 7px; }
.acct .usr { margin-left: 13px; margin-top: -5px; }
.acct .dim { color: #b3c4d6; }
.acct span.dim { margin-left: 10px; width: 34px; }

.ribbon { height: 145px; flex: none; display: flex; background: #f0f0f0; border-top: 1px solid #e4e4e4; border-bottom: 1px solid #cfcfcf; padding-top: 2px; }
.grp { height: 136px; border-right: 1px solid #cfcfcf; flex: none; }
.g1 { width: 148px; } .g2 { width: 374px; } .g3 { width: 238px; } .g4 { width: 512px; } .g5 { width: 448px; } .g6 { width: 135px; }
.body { height: 108px; display: flex; }
.body > * { flex: none; }
.g1 .body { padding-left: 11px; }
.g2 .body { padding-left: 13px; }
.g3 .body { padding-left: 9px; }
.g4 .body, .g5 .body, .g6 .body { padding-left: 7px; }
.cap { height: 28px; line-height: 28px; text-align: center; color: #666; }
.g1 .cap { width: 152px; }
.big { width: 64px; padding-top: 8px; display: flex; flex-direction: column; align-items: center; }
.big i { height: 48px; display: flex; align-items: center; }
.big b { font-weight: 400; line-height: 17px; margin-top: 7px; text-align: center; }
.big .cv { margin-top: 8px; }
.b94 { width: 94px; } .b89 { width: 89px; } .b92 { width: 92px; } .b72 { width: 72px; }
.vsep { width: 1px; height: 95px; margin: 8px 6px 0 0; background: #cfcfcf; }
.vsep.wide { margin: 8px 7px 0 4px; }
.vsep.after { margin: 8px 7px 0 0; }
.list { padding-top: 3px; }
.list > div { height: 34px; display: flex; align-items: center; }
.list i { width: 24px; display: flex; justify-content: center; margin-right: 6px; }
.list .end { margin-left: auto; }
.list .cv { margin-left: 6px; margin-top: -4px; }
.lw { width: 160px; padding-right: 11px; }
.lp { padding-left: 8px; }
.lp i { width: 22px; margin-right: 7px; }
.lm { padding-left: 7px; }
.lm i { width: 22px; }
.ld { width: 150px; padding-left: 9px; }
.ld i, .lk i { width: 18px; margin-right: 8px; }
.lk { padding-left: 9px; }
.lh { padding-left: 7px; }
.knot { color: #6482ab; }
.onbook { color: #fff; }

.crumbs { height: 37px; flex: none; display: flex; align-items: center; background: #efefef; }
.grip { margin-left: 4px; }
.back { margin-left: 5px; }
.fwd { margin-left: 8px; }
.path { margin-left: 8px; width: 1443px; height: 31px; background: #fff; display: flex; align-items: center; padding-left: 7px; }
.path span { margin: 1px 14px 0 15px; }
.path span:nth-of-type(1) { margin: 0 20px 0 18px; }
.go { margin-left: 14px; }
.findpkg { margin-left: 13px; width: 246px; height: 33px; border: 1px solid #b9b9b9; background: #fff; line-height: 32px; padding-left: 7px; color: #7b7b7b; letter-spacing: .1px; }
.crumbs .lens { margin-left: 6px; }
.dotgrid { margin-left: 10px; }
.csep { width: 1px; height: 31px; margin: 0 9px; background: #cfcfcf; }
.gray { color: #6d6d6d; }

.work { height: 766px; flex: none; display: flex; background: #e5e5e5; border-bottom: 1px solid #c9c9c9; }
.work > * { flex: none; }
.phead { height: 48px; display: flex; align-items: center; color: #6b6b6b; padding: 0 0 3px 4px; background: #e5e5e5; flex: none; }
.phead h2 { font-size: 25.400px; color: #444; overflow: hidden; padding-top: 5px; line-height: 38px; }
.browser { width: 242px; display: flex; flex-direction: column; background: #f0f0f0; }
.browser .phead h2 { width: 163px; }
.phead svg:nth-of-type(2) { margin-left: 16px; }
.phead svg:nth-of-type(3) { margin-left: 17px; }
.btools { height: 36px; display: flex; align-items: center; background: #ededed; padding-left: 6px; }
.btools svg:nth-of-type(2) { margin-left: 10px; }
.btools svg:nth-of-type(3) { margin-left: 10px; }
.btools svg:nth-of-type(4) { margin-left: 13px; }
.btools svg:nth-of-type(5) { margin-left: 20px; }
.btools svg:nth-of-type(6) { margin-left: 12px; }
.btools svg:nth-of-type(7) { margin-left: 6px; }
.tsep { width: 1px; height: 32px; background: #ccc; }
.btools .tsep:nth-of-type(1) { margin-left: 11px; }
.btools .tsep:nth-of-type(2) { margin-left: 15px; }
.btabs { height: 38px; line-height: 40px; padding-left: 10px; display: flex; }
.btabs span { width: 59.200px; }
.blue { color: #3b5f8c; }
.peak { height: 26px; }
.treewrap { height: 561px; display: flex; }
.tree { width: 216px; background: #fff; overflow: hidden; font-size: 16.500px; }
.n { height: 30px; position: relative; display: flex; align-items: center; }
.n svg { margin-top: -5px; }
.n span { position: absolute; top: 6px; }
.sel { background: #efefef; }
.r0 { padding-left: 85px; } .r0 span { left: 116px; }
.r2 { padding-left: 87px; } .r2 span { left: 116px; }
.r3 { padding-left: 116px; } .r3 span { left: 149px; }
.r4 { padding-left: 117px; } .r4 span { left: 149px; }
.r5 { padding-left: 118px; } .r5 span { left: 149px; }
.r7 { padding-left: 120px; } .r7 span { left: 149px; }
.r8 { padding-left: 149px; } .r8 span { left: 182px; }
.r10 { padding-left: 151px; } .r10 span { left: 182px; }
.r12 { padding-left: 188px; }
.exp::before, .col::before { content: ""; position: absolute; width: 8px; height: 8px; border: solid #8a8a8a; border-width: 0 1px 1px 0; transform: rotate(45deg); top: 12px; left: 59px; }
.col::before { transform: rotate(-45deg); left: 91px; top: 11px; }
.r7.exp::before { left: 92px; }
.r8.exp::before { left: 125px; }
.vscroll { width: 26px; background: #e5e5e5; display: flex; flex-direction: column; }
.sb, .thumb { border: 1px solid #b0b0b0; background: #fff; flex: none; }
.sb { width: 26px; height: 26px; display: flex; align-items: center; justify-content: center; color: #6b6b6b; }
.vscroll .sb:first-child svg { transform: rotate(180deg); }
.vscroll .dn { margin-top: auto; }
.browser .vscroll .thumb { height: 145px; margin-top: 275px; }
.hscroll { height: 26px; display: flex; background: #e5e5e5; }
.hscroll .rt { margin-left: auto; }
.browser .hscroll .thumb { width: 39px; margin-left: 10px; }
.corner { width: 26px; background: #f8f8f8; }
.bfoot { height: 30px; background: #e5e5e5; display: flex; border-top: 1px solid #c9c9c9; }
.bfoot span { line-height: 25px; height: 29px; border-bottom: 5px solid #c1d0f2; letter-spacing: .1px; }
.bfoot .on { width: 78px; background: #fff; padding-left: 10px; border-right: 1px solid #b0b0b0; }
.bfoot .insp { margin-left: 3px; width: 85px; padding-left: 8px; border-bottom: 4px solid #ffda73; }

.toolbox { width: 173px; margin-left: 6px; display: flex; flex-direction: column; border-left: 1px solid #c9c9c9; border-right: 1px solid #c9c9c9; box-shadow: -3px 0 #d3d3d3; }
.toolbox .phead { padding-left: 3px; border-bottom: 1px solid #fff; }
.toolbox .phead h2 { width: 95px; letter-spacing: .2px; }
.tsearch { height: 37px; display: flex; align-items: center; padding-bottom: 1px; border-bottom: 1px solid #c9c9c9; }
.tsearch .box { width: 88px; height: 36px; background: #fff; border-right: 1px solid #c9c9c9; display: flex; align-items: center; padding-left: 9px; color: #666; }
.tsearch .box span { width: 53px; padding-top: 1px; }
.tsearch .lens { margin-left: 9px; }
.tsearch .gray { margin-left: 18px; }
.tlist { height: 658px; background: #fff; padding: 4px 2px 0; font-size: 16.400px; letter-spacing: -.05px; }
.th { height: 24px; line-height: 24px; background: #cdcdcd; color: #000; font-weight: 700; display: flex; align-items: center; gap: 9px; padding-left: 7px; margin-bottom: 8px; font-size: 16.200px; letter-spacing: .35px; overflow: hidden; }
.th.two { margin: 8px 0; }
.ti { height: 34px; display: flex; align-items: center; padding-left: 36px; }
.ti i { width: 22px; margin-right: 10px; display: flex; justify-content: center; }
.tmore { height: 22px; border: 1px solid #c3c3c3; display: flex; align-items: center; justify-content: center; color: #777; }
.mini { font: 700 6px "Open Sans", sans-serif; fill: #3f4280; }
.mini-sf { font-size: 9px; }

.doc { width: 1384px; margin-left: 5px; display: flex; flex-direction: column; border-left: 1px solid #c9c9c9; border-right: 1px solid #c9c9c9; border-top: 1px solid #c9c9c9; box-shadow: -2px 0 #dadada; }
.doc > * { flex: none; }
.dhead { height: 39px; display: flex; align-items: center; color: #777; padding-left: 7px; padding-top: 2px; }
.dhead span { width: 1149px; font-size: 15px; letter-spacing: .12px; margin-left: 50px; }
.dhead svg { margin-top: -4px; color: #000; }
.dhead .d2 { margin-left: 39px; }
.dhead .d4 { margin-left: 30px; }
.dhead .d5 { margin-left: 21px; }
.dtabs { height: 42px; display: flex; border-top: 1px solid #c9c9c9; border-bottom: 1px solid #c9c9c9; font-size: 26px; letter-spacing: .36px; }
.dt { display: flex; align-items: center; height: 41px; overflow: hidden; flex: none; }
.dt svg { margin-top: -4px; }
.dt span { padding-top: 6px; line-height: 34px; }
.t1 { width: 160px; }
.t1 svg { margin-left: -5px; margin-top: 0; }
.t1 span { margin-left: 4px; letter-spacing: 0; }
.t2 { width: 399px; padding-left: 5px; }
.t2 span { margin-left: 5px; }
.t3 { width: 387px; padding-left: 6px; background: #fff; border: solid #a9a9a9; border-width: 1px 1px 0; }
.t3 span { margin-left: 5px; width: 328px; padding-top: 5px; }
.t3 .x { color: #777; margin-top: 0; }
.t4 { width: 380px; padding-left: 8px; }
.t4 span { margin-left: 5px; letter-spacing: .12px; }
.nav { display: flex; align-items: center; gap: 15px; margin-left: 18px; color: #777; }
.dbody { height: 657px; display: flex; }
.canvas { width: 1356px; }
.lab { font-size: 8.500px; fill: #4c4c4c; }
.lab .bold { font-weight: 700; font-size: 8.200px; }
.dbody .vscroll { width: 26px; }
.dbody .vscroll .thumb { height: 259px; margin-top: 139px; }
.doc .hscroll { padding-right: 26px; }
.doc .hscroll .thumb { width: 670px; margin-left: 418px; border-color: #999; }

.right { width: 108px; margin-left: 2px; border-left: 4px solid #d3d3d3; display: flex; flex-direction: column; background: #f0f0f0; overflow: hidden; }
.right .phead { padding-left: 4px; }
.right .phead h2 { width: 16px; margin-right: 9px; flex: none; }
.right .phead svg:nth-of-type(2) { margin-left: 16px; }
.right .phead svg:nth-of-type(3) { margin-left: 17px; }
.rtabs { height: 32px; line-height: 32px; padding-left: 11px; display: flex; }
.rtabs span { width: 24.700px; letter-spacing: -.6px; flex: none; }
.rpeak { height: 24px; }
.rtools { height: 36px; background: #ebebeb; display: flex; align-items: center; padding-left: 9px; gap: 13px; }
.rcal { height: 51px; line-height: 54px; padding-left: 11px; font-size: 16px; letter-spacing: -.2px; }
.rtable { height: 164px; margin-left: 11px; background: #fff; border: solid #c9c9c9; border-width: 2px 0 0 1px; overflow: hidden; }
.rth { height: 38px; line-height: 38px; width: 100%; background: linear-gradient(90deg, #e5e5e5 84px, #aaa 84px, #aaa 85px, #e5e5e5 85px); border-bottom: 1px solid #999; padding-left: 9px; }
.rtd { height: 36px; line-height: 37px; padding-left: 6px; font-size: 16.500px; overflow: hidden; }
.rtd span { margin-left: 12px; }
.rnew { height: 36px; line-height: 36px; padding-left: 12px; font-style: italic; color: #bbb; letter-spacing: .2px; }
.rfoot { height: 30px; display: flex; background: #e5e5e5; border-top: 1px solid #c9c9c9; }
.rfoot span { width: 47px; height: 28px; margin: 0 2px; line-height: 26px; padding-left: 8px; border-bottom: 4px solid #c1d0f2; flex: none; letter-spacing: -.2px; }
.rfoot .on { width: 50px; height: 30px; margin: -1px 0 0; padding-left: 9px; background: #fff; border: solid #aaa; border-width: 0 1px 5px; border-bottom-color: #a3bdd3; }
.split { height: 7px; background: #cacaca; }
.right .nh { height: 46px; }
.biu { height: 36px; background: #ebebeb; font: 23px/36px "Liberation Serif", serif; color: #66647f; display: flex; padding-left: 12px; }
.biu b { width: 36px; } .biu i { font-style: italic; width: 27px; }
.notes { flex: 1; background: #fff; }

.status { height: 38px; display: flex; flex: none; line-height: 38px; background: #f0f0f0; padding-left: 2px; letter-spacing: .06px; }
.status span { flex: none; }
.s1 { width: 406px; letter-spacing: .13px; } .s2 { width: 229px; } .s3 { width: 244px; } .s4 { width: 47px; } .s5 { width: 364px; } .s6 { width: 149px; }
.zoomer { width: 220px; }
.status .k { color: #a8a8a8; margin-left: 17px; width: 35px; }
.status .k2 { width: 43px; } .status .k3 { width: 42px; } .status .k4 { width: 60px; }
```
